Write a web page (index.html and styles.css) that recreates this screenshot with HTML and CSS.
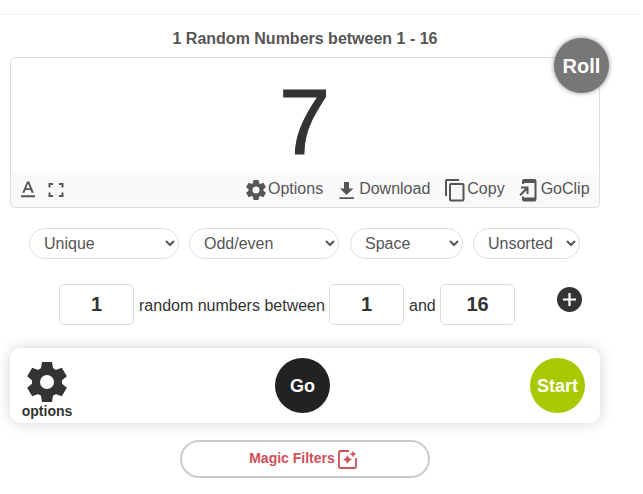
FILE: index.html
```html
<!DOCTYPE html>
<html lang="en">
<head>
<meta charset="utf-8">
<title>Random Numbers</title>
<link rel="stylesheet" href="styles.css">
</head>
<body>
<svg width="0" height="0" class="defs">
  <symbol id="gear" viewBox="0 0 48 48">
    <circle cx="24" cy="24" r="11" fill="none" stroke="currentColor" stroke-width="8"/>
    <path d="M19 4h10l1.300 8h-12.600zM19 44h10l1.300-8h-12.600z"/>
    <path transform="rotate(60 24 24)" d="M19 4h10l1.300 8h-12.600zM19 44h10l1.300-8h-12.600z"/>
    <path transform="rotate(120 24 24)" d="M19 4h10l1.300 8h-12.600zM19 44h10l1.300-8h-12.600z"/>
  </symbol>
</svg>
<div class="divider"></div>
<main class="page">
  <h1 class="title">1 Random Numbers between 1 - 16</h1>
  <section class="result">
    <button class="round roll">Roll</button>
    <div class="value">7</div>
    <div class="toolbar">
      <svg class="ic-text" width="16" height="18" viewBox="0 0 16 18"><path d="M1 14.300h14v2H1zM7 .5h2.200l4.600 11.200h-2.200l-1-2.600H5.500l-1 2.600H2.300zM6.200 7.300h3.700L8.050 2.500z"/></svg>
      <svg class="ic-full" width="16" height="16" viewBox="0 0 16 16"><path d="M.5 1H5v2H2.500v2.500h-2zM11 1h4.500v4.500h-2V3H11zM.5 10.500h2V13H5v2H.5zM13.500 10.500h2V15H11v-2h2.500z"/></svg>
      <a class="tool t-options"><svg width="24" height="24"><use href="#gear"/></svg><span>Options</span></a>
      <a class="tool t-download"><svg width="16" height="19" viewBox="0 0 16 19"><path d="M5 1h5v6.500h4.500L7.500 14 1 7.500h4zM.5 16.300h14.500v1.700H.5z"/></svg><span>Download</span></a>
      <a class="tool t-copy"><svg width="20" height="23" viewBox="0 0 20 23"><path fill-rule="evenodd" d="M0 2Q0 0 2 0h12v2H2v15H0zM6 4h11.500Q19.500 4 19.500 6v14.500q0 2-2 2H6q-2 0-2-2V6q0-2 2-2zm0 2v14.500h11.500V6z"/></svg><span>Copy</span></a>
      <a class="tool t-clip"><svg width="18" height="23" viewBox="0 0 18 23"><path d="M3 5V2Q3 0 5 0h10.500q2 0 2 2v18.500q0 2-2 2H5q-2 0-2-2v-3h2v1h10.500V4H5v1zM2 7.500h7.500V15h-2v-3.800L1.800 17 .4 15.600 6.200 9.500H2z"/></svg><span>GoClip</span></a>
    </div>
  </section>
  <div class="filters">
    <select class="s1"><option>Unique</option></select>
    <select class="s2"><option>Odd/even</option></select>
    <select class="s3"><option>Space</option></select>
    <select class="s4"><option>Unsorted</option></select>
  </div>
  <div class="range">
    <input value="1" aria-label="Amount"><span class="w1">random numbers between</span><input value="1" aria-label="Minimum"><span class="w2">and</span><input value="16" aria-label="Maximum">
    <svg class="plus" width="25" height="25" viewBox="0 0 25 25"><circle cx="12.500" cy="12.500" r="12.500"/><path d="M12.500 6v13M6 12.500h13" stroke="#fff" stroke-width="2.200"/></svg>
  </div>
  <section class="actions">
    <a class="settings"><svg width="48" height="48"><use href="#gear"/></svg><span>options</span></a>
    <button class="round go">Go</button>
    <button class="round start">Start</button>
  </section>
  <button class="magic"><span>Magic Filters</span><svg width="19" height="19" viewBox="0 0 19 19"><path d="M11 1H2.200Q1 1 1 2.200v14.600Q1 18 2.200 18h14.600q1.200 0 1.200-1.200V8" fill="none" stroke="currentColor" stroke-width="1.800"/><path d="M9.500 5.500l1.400 2.600 2.600 1.400-2.600 1.400-1.400 2.600-1.400-2.600-2.600-1.400 2.600-1.400zM15 1.200l1 1.800 1.800 1-1.800 1-1 1.800-1-1.800-1.800-1 1.800-1z" stroke="currentColor" stroke-width=".4"/></svg></button>
</main>
</body>
</html>
```
FILE: styles.css
```css
* { box-sizing: border-box; }
body {
  margin: 0;
  padding-top: 14px;
  background: #fff;
  color: #333;
  font-family: "Liberation Sans", Arial, sans-serif;
  font-size: 16px;
}
svg { fill: currentColor; flex: none; }
.defs { display: none; }
.divider { width: 640px; border-top: 1px dotted #e8e8e8; }
.page { width: 590px; margin-left: 10px; display: flex; flex-direction: column; }
.title {
  margin: 14px 0 0;
  height: 28px;
  line-height: 20px;
  font-size: 16px;
  text-align: center;
  color: #555;
}
.result {
  position: relative;
  height: 151px;
  border: 1px solid #ddd;
  border-radius: 5px;
}
.value {
  height: 115px;
  line-height: 129px;
  text-align: center;
  font-size: 92px;
  padding-right: 1px;
  -webkit-text-stroke: 1px #333;
}
.toolbar {
  display: flex;
  align-items: center;
  height: 34px;
  padding-left: 9px;
  background: #f9f9f9;
  border-radius: 0 0 5px 5px;
  color: #555;
}
.ic-full { margin-left: 12px; }
.tool { display: flex; align-items: center; height: 32px; line-height: 30px; }
.tool span { padding-bottom: 2px; }
.t-options { margin-left: 180px; }
.t-download { margin-left: 16px; }
.t-download svg { margin-right: 4px; }
.t-copy { margin-left: 15px; }
.t-copy svg { margin-right: 2px; }
.t-clip { margin-left: 14px; }
.t-clip svg { margin-right: 4px; }
.round {
  width: 55px;
  height: 55px;
  padding: 1px 0 0;
  border: 0;
  border-radius: 50%;
  color: #fff;
  font: bold 18px "Liberation Sans", Arial, sans-serif;
}
.roll {
  position: absolute;
  top: -20px;
  right: -10px;
  background: #777;
  font-size: 20px;
  box-shadow: 0 0 5px #888;
}
.filters { display: flex; margin: 20px 0 0 19px; }
.filters select {
  height: 31px;
  padding: 0 0 0 10px;
  border: 1px solid #ddd;
  border-radius: 16px;
  background-color: #fff;
  color: #555;
  font: 16px "Liberation Sans", Arial, sans-serif;
}
.s1, .s2 { width: 150px; }
.s2 { margin-left: 10px; }
.s3 { width: 113px; margin-left: 11px; }
.s4 { width: 107px; margin-left: 10px; }
.range { display: flex; align-items: center; height: 41px; margin: 25px 0 0 49px; }
.range input {
  width: 75px;
  height: 41px;
  padding: 0 0 1px;
  border: 1px solid #ddd;
  border-radius: 5px;
  color: #333;
  text-align: center;
  font: bold 20px "Liberation Sans", Arial, sans-serif;
}
.w1 { width: 195px; padding: 2px 0 0 5px; white-space: nowrap; }
.w2 { width: 36px; padding: 2px 0 0 5px; }
.plus { margin: 0 0 11px 42px; }
.actions {
  display: flex;
  align-items: center;
  height: 75px;
  margin-top: 23px;
  padding: 0 15px 0 12px;
  border-radius: 10px;
  background: #fff;
  box-shadow: 0 0 14px #d4d4d4;
}
.settings {
  display: flex;
  flex-direction: column;
  align-items: center;
  width: 50px;
  height: 75px;
  padding-top: 10px;
  font-size: 14px;
  font-weight: bold;
  line-height: 16px;
}
.settings span { margin-top: -3px; }
.go { margin-left: 203px; background: #222; }
.start { margin-left: auto; background: #a8c900; }
.magic {
  display: flex;
  align-items: center;
  justify-content: center;
  width: 250px;
  height: 38px;
  margin: 17px 0 0 170px;
  padding: 0 4px 0 0;
  border: 2px solid #ccc;
  border-radius: 19px;
  background: #fff;
  color: #d04f5a;
  font: bold 14px "Liberation Sans", Arial, sans-serif;
}
.magic span { padding-bottom: 2px; }
.magic svg { margin-left: 3px; }
```
